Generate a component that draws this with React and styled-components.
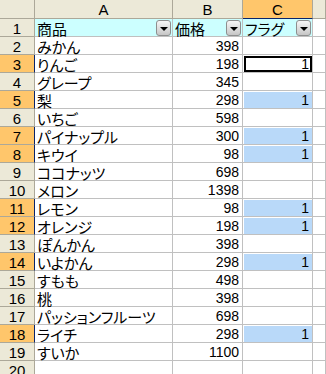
import React from "react";
import styled, { createGlobalStyle, css } from "styled-components";

const Global = createGlobalStyle`
  html, body { margin: 0; padding: 0; background: #ffffff; }
  body { font-family: "MS PGothic", "Noto Sans CJK JP", sans-serif; }
`;

const Sheet = styled.div`
  display: grid;
  grid-template-columns: 35px 138px 70px 70px 1fr;
  grid-template-rows: 19px;
  grid-auto-rows: 18px;
  width: 326px;
  height: 374px;
  overflow: hidden;
  font-size: 14px;
  color: #000;
`;

const Head = styled.div`
  box-sizing: border-box;
  display: flex;
  align-items: center;
  justify-content: center;
  background: ${(p) => (p.$sel ? "#FFC66B" : "#ECE9D8")};
  border-right: 1px solid ${(p) => (p.$blueRight ? "#0A246A" : "#ACA899")};
  border-bottom: 1px solid ${(p) => (p.$blueBottom ? "#0A246A" : "#ACA899")};
  font-family: "Liberation Sans", "Noto Sans CJK JP", sans-serif;
  font-size: 15px;
  line-height: 1;
  padding-top: 1px;
  overflow: hidden;
`;

const Cell = styled.div`
  box-sizing: border-box;
  position: relative;
  display: flex;
  align-items: center;
  justify-content: ${(p) => (p.$num ? "flex-end" : "flex-start")};
  padding: ${(p) => (p.$num ? "1px 3px 0 0" : "1px 0 0 2px")};
  background: ${(p) => (p.$head ? "#CCFFFF" : "#ffffff")};
  border-right: 1px solid #C0C0C0;
  border-bottom: 1px solid #C0C0C0;
  white-space: nowrap;
  line-height: 1;
  font-family: ${(p) =>
    p.$num
      ? `"Liberation Sans", "Noto Sans CJK JP", sans-serif`
      : `"Noto Sans CJK JP", sans-serif`};
  font-size: ${(p) => (p.$num ? "14px" : "15px")};
  font-feature-settings: "palt";
  ${(p) =>
    p.$sel &&
    css`
      &::before {
        content: "";
        position: absolute;
        left: 1px;
        top: 1px;
        right: 0;
        bottom: 0;
        background: #B9D9F9;
      }
    `}
  ${(p) =>
    p.$active &&
    css`
      &::before {
        content: "";
        position: absolute;
        left: 1px;
        top: 1px;
        right: 0;
        bottom: 0;
        border: 2px solid #000;
      }
    `}
`;

const Val = styled.span`
  position: relative;
`;

const FilterBtn = styled.span`
  position: absolute;
  right: 1px;
  top: 1px;
  width: 15px;
  height: 16px;
  box-sizing: border-box;
  border: 1px solid #8E8F8F;
  border-radius: 3px;
  background: linear-gradient(#F6F6F6, #DADADA 60%, #C6C6C6);
  display: flex;
  align-items: center;
  justify-content: center;
  &::after {
    content: "";
    width: 0;
    height: 0;
    border-left: 4px solid transparent;
    border-right: 4px solid transparent;
    border-top: 4px solid #000;
    margin-top: 1px;
  }
`;

const rows = [
  ["みかん", 398, null],
  ["りんご", 198, 1],
  ["グレープ", 345, null],
  ["梨", 298, 1],
  ["いちご", 598, null],
  ["パイナップル", 300, 1],
  ["キウイ", 98, 1],
  ["ココナッツ", 698, null],
  ["メロン", 1398, null],
  ["レモン", 98, 1],
  ["オレンジ", 198, 1],
  ["ぽんかん", 398, null],
  ["いよかん", 298, 1],
  ["すもも", 498, null],
  ["桃", 398, null],
  ["パッションフルーツ", 698, null],
  ["ライチ", 298, 1],
  ["すいか", 1100, null],
];

export default function App() {
  return (
    <>
      <Global />
      <Sheet>
        <Head />
        <Head>A</Head>
        <Head>B</Head>
        <Head $sel $blueBottom>
          C
        </Head>
        <Head />

        <Head>1</Head>
        <Cell $head>
          商品
          <FilterBtn />
        </Cell>
        <Cell $head>
          価格
          <FilterBtn />
        </Cell>
        <Cell $head>
          フラグ
          <FilterBtn />
        </Cell>
        <Cell />

        {rows.map(([name, price, flag], i) => {
          const n = i + 2;
          const sel = flag === 1;
          const active = n === 3;
          return (
            <React.Fragment key={n}>
              <Head $sel={sel} $blueRight={sel}>
                {n}
              </Head>
              <Cell>{name}</Cell>
              <Cell $num>{price}</Cell>
              <Cell $num $sel={sel && !active} $active={active}>
                {flag != null && <Val>{flag}</Val>}
              </Cell>
              <Cell />
            </React.Fragment>
          );
        })}

        <Head>20</Head>
        <Cell />
        <Cell />
        <Cell />
        <Cell />
      </Sheet>
    </>
  );
}
